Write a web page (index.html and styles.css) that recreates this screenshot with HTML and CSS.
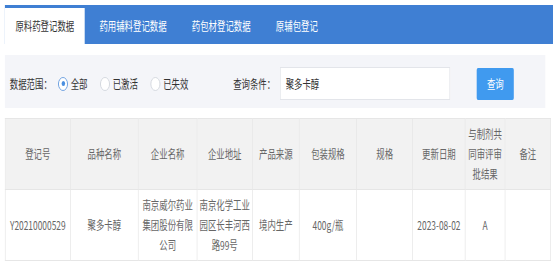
FILE: index.html
```html
<!DOCTYPE html>
<html lang="zh-CN">
<head>
  <meta charset="UTF-8">
  <meta name="viewport" content="width=device-width, initial-scale=1.0">
  <title>原料药登记数据</title>
  <link rel="stylesheet" href="styles.css">
</head>
<body>

<div class="frame">
<div class="page">
  <ul class="tabs">
    <li class="tab active">原料药登记数据</li>
    <li class="tab">药用辅料登记数据</li>
    <li class="tab">药包材登记数据</li>
    <li class="tab">原辅包登记</li>
  </ul>

  <form class="filter">
    <span class="label">数据范围：</span>
    <label class="radio checked"><span class="dot"></span>全部</label>
    <label class="radio"><span class="dot"></span>已激活</label>
    <label class="radio"><span class="dot"></span>已失效</label>
    <span class="label query-label">查询条件：</span>
    <input class="query" type="text" value="聚多卡醇">
    <button class="btn" type="button">查询</button>
  </form>

  <table class="grid">
    <colgroup>
      <col style="width:93px">
      <col style="width:97px">
      <col style="width:84px">
      <col style="width:79px">
      <col style="width:67px">
      <col style="width:82px">
      <col style="width:80px">
      <col style="width:75px">
      <col style="width:57px">
      <col style="width:65px">
    </colgroup>
    <thead>
      <tr>
        <th>登记号</th>
        <th>品种名称</th>
        <th>企业名称</th>
        <th>企业地址</th>
        <th>产品来源</th>
        <th>包装规格</th>
        <th>规格</th>
        <th>更新日期</th>
        <th>与制剂共同审评审批结果</th>
        <th>备注</th>
      </tr>
    </thead>
    <tbody>
      <tr>
        <td>Y20210000529</td>
        <td>聚多卡醇</td>
        <td>南京威尔药业集团股份有限公司</td>
        <td>南京化学工业园区长丰河西路99号</td>
        <td>境内生产</td>
        <td>400g/瓶</td>
        <td></td>
        <td>2023-08-02</td>
        <td>A</td>
        <td></td>
      </tr>
    </tbody>
  </table>
</div>
</div>

</body>
</html>
```

FILE: styles.css
```css
html, body { margin: 0; padding: 0; overflow: hidden; background: #fff; }
body { font-family: "Noto Sans CJK SC", "Noto Sans", sans-serif; font-size: 12px; color: #666; }

/* the screenshot is squeezed horizontally, so lay out wide and scale */
.frame { width: 554px; height: 266px; overflow: hidden; }
.page { width: 790px; transform: scaleX(0.7); transform-origin: 0 0; }

.tabs { display: flex; align-items: flex-end; list-style: none; margin: 5px 0 0 7px; padding: 0; height: 39px; background: #3f7fd3; }
.tab { height: 36px; line-height: 36px; padding: 0 15px; margin-right: 6px; color: #fff; white-space: nowrap; }
.tab.active { background: #fff; color: #333; }

.filter { display: flex; align-items: center; margin: 11px 0 0 7px; width: 765px; height: 49px; padding: 4px 0 0 7px; background: #f4f5f9; }
.label { color: #333; white-space: nowrap; }
.radio { display: flex; align-items: center; color: #333; margin-left: 18px; white-space: nowrap; }
.radio:first-of-type { margin-left: 9px; }
.dot { box-sizing: border-box; width: 14px; height: 14px; margin-right: 4px; border: 1px solid #cfd3da; border-radius: 50%; background: #fff; position: relative; }
.radio.checked .dot { border-color: #5b95dd; }
.radio.checked .dot::after { content: ""; position: absolute; left: 3.5px; top: 3.5px; width: 5px; height: 5px; border-radius: 50%; background: #4a8fe0; }
.query-label { margin-left: 64px; }
.query { box-sizing: border-box; width: 243px; height: 33px; margin-left: 7px; padding: 0 7px; border: 1px solid #e3e5ea; background: #fff; font: inherit; color: #333; outline: none; }
.btn { width: 53px; height: 32px; margin-left: 38px; border: none; border-radius: 2px; background: #409aef; color: #fff; font: inherit; cursor: pointer; }

.grid { margin: 10px 0 0 7px; width: 779px; table-layout: fixed; border-collapse: collapse; border: 1px solid #e6e6e6; }
.grid th, .grid td { border: 1px solid #e6e6e6; padding: 5px 3px; text-align: center; vertical-align: middle; line-height: 20px; font-weight: normal; color: #666; }
.grid th { background: #f2f2f2; height: 60px; }
.grid td { height: 60px; }
```
